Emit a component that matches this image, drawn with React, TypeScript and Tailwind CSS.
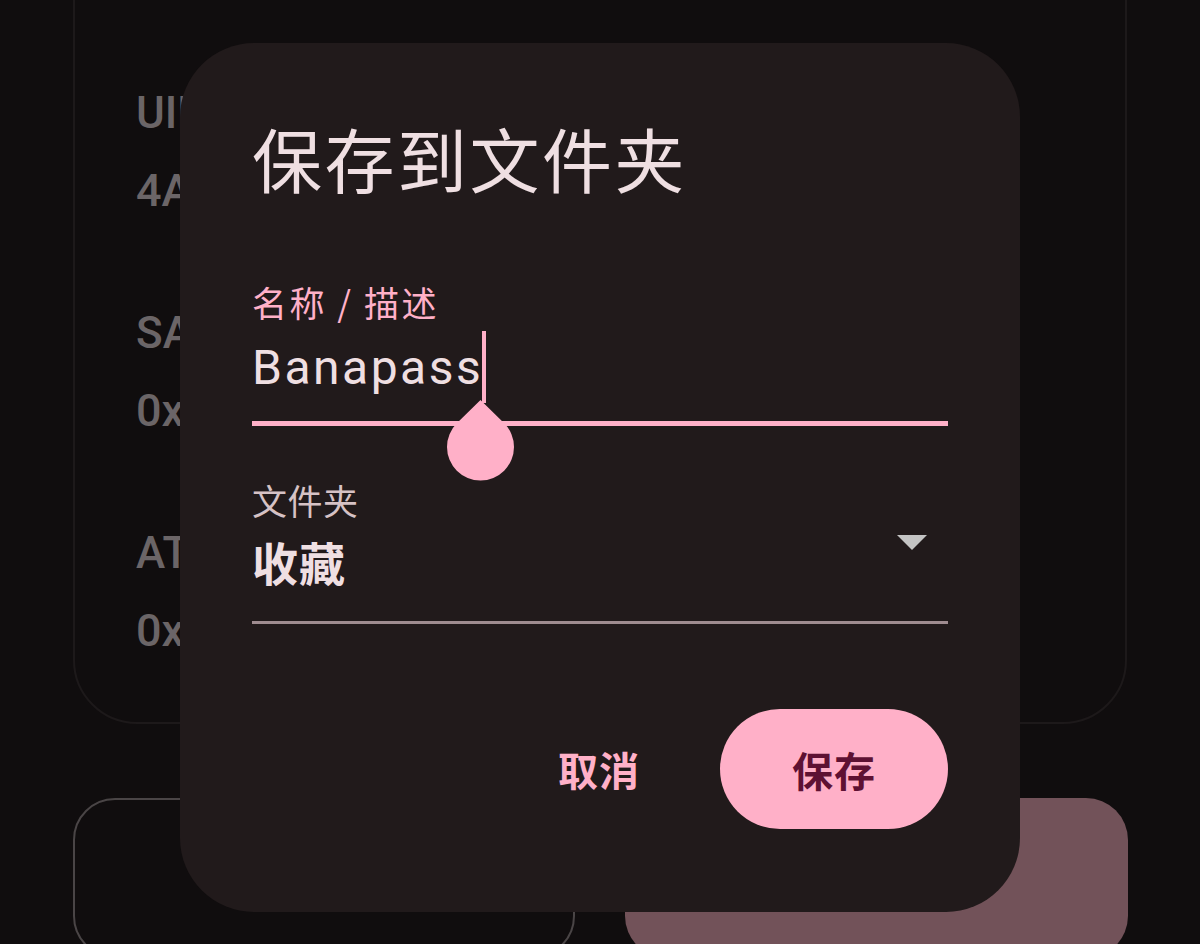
import React from 'react'

const ROWS = [
  { label: 'UID', value: '4A3F9C21' },
  { label: 'SAK', value: '0x08' },
  { label: 'ATQA', value: '0x0004' },
]

const LATIN = 'font-[Roboto,"Noto_Sans_CJK_SC",sans-serif]'
const CJK = 'font-["Noto_Sans_CJK_SC",sans-serif]'

function CardBehind() {
  return (
    <div className="ml-[73px] mt-[-80px] h-[804px] w-[1054px] rounded-[64px] border-2 border-[#1d191a] pl-[61px] pt-[169px]">
      {ROWS.map((row, i) => (
        <div key={row.label} className={i > 0 ? 'mt-[98px]' : ''}>
          <div className={`${LATIN} text-[44px] leading-[44px] font-medium text-[#6b6567]`}>{row.label}</div>
          <div className={`${LATIN} mt-[34px] text-[45px] leading-[44px] font-medium text-[#6b6567]`}>{row.value}</div>
        </div>
      ))}
    </div>
  )
}

function Teardrop() {
  return (
    <svg width="67" height="81" viewBox="0 0 67 81" className="absolute left-[195px] top-[116px]">
      <path d="M33.5 0 L57.2 23.3 A33.5 33.5 0 1 1 9.8 23.3 Z" fill="#ffb0c8" />
    </svg>
  )
}

function SaveDialog() {
  return (
    <div className="absolute left-[180px] top-[43px] flex h-[869px] w-[840px] flex-col rounded-[74px] bg-[#211a1b] px-[72px] pt-[80px]">
      <h1 className={`${CJK} text-[70px] leading-[70px] tracking-[2.5px] font-normal text-[#efdfe2]`}>保存到文件夹</h1>

      {/* name field, focused */}
      <div className="relative mt-[91px]">
        <div className={`${CJK} text-[35px] leading-[35px] text-[#ffb0c8] tracking-[2.5px]`}>名称 / 描述</div>
        <div className={`${LATIN} mt-[25px] text-[48px] leading-[48px] tracking-[2.5px] text-[#efdfe2]`}>Banapass</div>
        <div className="mt-[29px] h-[5px] w-full bg-[#ffb0c8]" />
        <div className="absolute left-[230px] top-[47px] h-[72px] w-[4px] bg-[#ffb0c8]" />
        <Teardrop />
      </div>

      {/* folder dropdown */}
      <div className="relative mt-[56px]">
        <div className={`${CJK} text-[35px] leading-[35px] tracking-[0.5px] text-[#d6c2c5]`}>文件夹</div>
        <div className={`${CJK} mt-[21px] text-[46px] leading-[46px] tracking-[1px] font-bold text-[#efdfe2]`}>收藏</div>
        <div className="mt-[37px] h-[3px] w-full bg-[#9f8c90]" />
        <svg width="30" height="15" viewBox="0 0 30 15" className="absolute right-[21px] top-[53px]">
          <path d="M0 0 H30 L15 15 Z" fill="#c4c4c4" />
        </svg>
      </div>

      <div className="mt-[85px] flex items-center justify-end gap-[80px]">
        <button className={`${CJK} text-[40px] leading-[40px] tracking-[1px] font-bold text-[#ffb0c8]`}>取消</button>
        <button className={`${CJK} flex h-[120px] w-[228px] items-center justify-center rounded-full bg-[#ffb0c8] text-[41px] leading-[41px] tracking-[1px] font-bold text-[#5e1133]`}>
          保存
        </button>
      </div>
    </div>
  )
}

export default function App() {
  return (
    <div className="relative h-[944px] w-[1200px] overflow-hidden bg-[#100d0e]">
      <CardBehind />
      <div className="ml-[73px] mt-[74px] flex gap-[50px]">
        <div className={`${CJK} flex h-[160px] w-[502px] items-center justify-center rounded-[42px] border-2 border-[#4a4546] text-[40px] text-[#6b6567]`}>
          读取
        </div>
        <div className={`${CJK} flex h-[160px] w-[503px] items-center justify-center rounded-[42px] bg-[#725259] text-[40px] text-[#2a1a1d]`}>
          写入
        </div>
      </div>
      <SaveDialog />
    </div>
  )
}
